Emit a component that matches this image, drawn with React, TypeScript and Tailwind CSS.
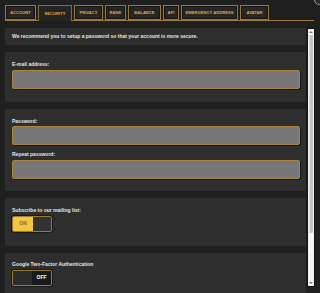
import React from "react";

// Account settings — security tab, dark theme with gold accents.

const tabs = [
  { label: "ACCOUNT", w: "w-[31px]" },
  { label: "SECURITY", w: "w-[34px]", active: true },
  { label: "PRIVACY", w: "w-[29px]" },
  { label: "RANK", w: "w-[21px]" },
  { label: "BALANCE", w: "w-[33px]" },
  { label: "API", w: "w-[16px]" },
  { label: "EMERGENCY ADDRESS", w: "w-[57px]" },
  { label: "AVATAR", w: "w-[29px]" },
];

function Card({ children, className = "" }: { children: React.ReactNode; className?: string }) {
  return <div className={`bg-[#2e2e2e] px-[7px] ${className}`}>{children}</div>;
}

function Label({ children }: { children: React.ReactNode }) {
  return <div className="text-[5px] font-bold leading-[6px] text-[#e6e6e6]">{children}</div>;
}

function Input() {
  return (
    <div className="h-[19px] w-[288px] rounded-[2px] border border-[#a8843c] bg-[#777777] shadow-[1px_1px_0_#151515]" />
  );
}

function Toggle({ on }: { on: boolean }) {
  return (
    <div className="flex h-[16px] w-[40px] overflow-hidden rounded-[2px] border border-[#9c7a36] shadow-[0_0_0_1px_#1a1a1a]">
      {on ? (
        <>
          <div className="flex w-[20px] items-center justify-center bg-[#f6c445] text-[5px] font-bold text-[#8a6a1e]">ON</div>
          <div className="flex-1 bg-[#333333]" />
        </>
      ) : (
        <>
          <div className="flex-1 bg-[#2c2c2c]" />
          <div className="flex w-[19px] items-center justify-center bg-[#181818] text-[5px] font-bold text-white">OFF</div>
        </>
      )}
    </div>
  );
}

export default function App() {
  return (
    <div
      className="relative flex h-[293px] w-[320px] flex-col overflow-hidden bg-[#1f1f1f]"
      style={{ fontFamily: '"Liberation Sans", Arial, sans-serif' }}
    >
      <div className="absolute right-[-5px] top-[-6px] h-[11px] w-[11px] rounded-full border border-[#9a9a9a] bg-[#2a2a2a]" />

      <div className="ml-[5px] mr-[6px] mt-[5px] flex h-[16px] items-end gap-[2px] border-b border-[#9c7a36]">
        {tabs.map((t) => (
          <div
            key={t.label}
            className={`flex h-[15px] ${t.w} items-center justify-center whitespace-nowrap text-[4px] font-bold tracking-[0.1px] text-[#e0ad3c] ${
              t.active
                ? "mb-[-1px] h-[16px] border border-b-0 border-[#8a6c30] bg-[#242424]"
                : "border border-[#9c7a36] bg-[#262626] shadow-[inset_0_0_0_1px_#151515]"
            }`}
          >
            {t.label}
          </div>
        ))}
      </div>

      <div className="flex flex-1 pl-[5px] pt-[7px]">
        <div className="flex w-[301px] flex-col gap-[7px]">
          <Card className="flex h-[17px] items-center">
            <div className="text-[5px] font-bold text-[#e6e6e6]">
              We recommend you to setup a password so that your account is more secure.
            </div>
          </Card>

          <Card className="flex h-[50px] flex-col gap-[3px] pt-[9px]">
            <Label>E-mail address:</Label>
            <Input />
          </Card>

          <Card className="flex h-[82px] flex-col pt-[9px]">
            <Label>Password:</Label>
            <div className="mt-[2px]">
              <Input />
            </div>
            <div className="mt-[6px]">
              <Label>Repeat password:</Label>
            </div>
            <div className="mt-[3px]">
              <Input />
            </div>
          </Card>

          <Card className="flex h-[48px] flex-col gap-[3px] pt-[9px]">
            <Label>Subscribe to our mailing list:</Label>
            <Toggle on />
          </Card>

          <Card className="flex h-[48px] flex-col gap-[3px] pt-[8px]">
            <Label>Google Two-Factor Authentication</Label>
            <Toggle on={false} />
          </Card>
        </div>

        <div className="ml-[1px] flex h-[259px] w-[8px] flex-col border border-[#111] bg-[#f4f4f4]">
          <div className="flex h-[6px] items-center justify-center">
            <div className="h-0 w-0 border-x-[2px] border-b-[2px] border-x-transparent border-b-[#777]" />
          </div>
          <div className="mx-[1px] h-[198px] rounded-[1px] bg-[#c4c4c4] shadow-[inset_1px_0_0_#dcdcdc]" />
          <div className="flex-1" />
          <div className="flex h-[6px] items-center justify-center">
            <div className="h-0 w-0 border-x-[2px] border-t-[2px] border-x-transparent border-t-[#777]" />
          </div>
        </div>
      </div>
    </div>
  );
}
